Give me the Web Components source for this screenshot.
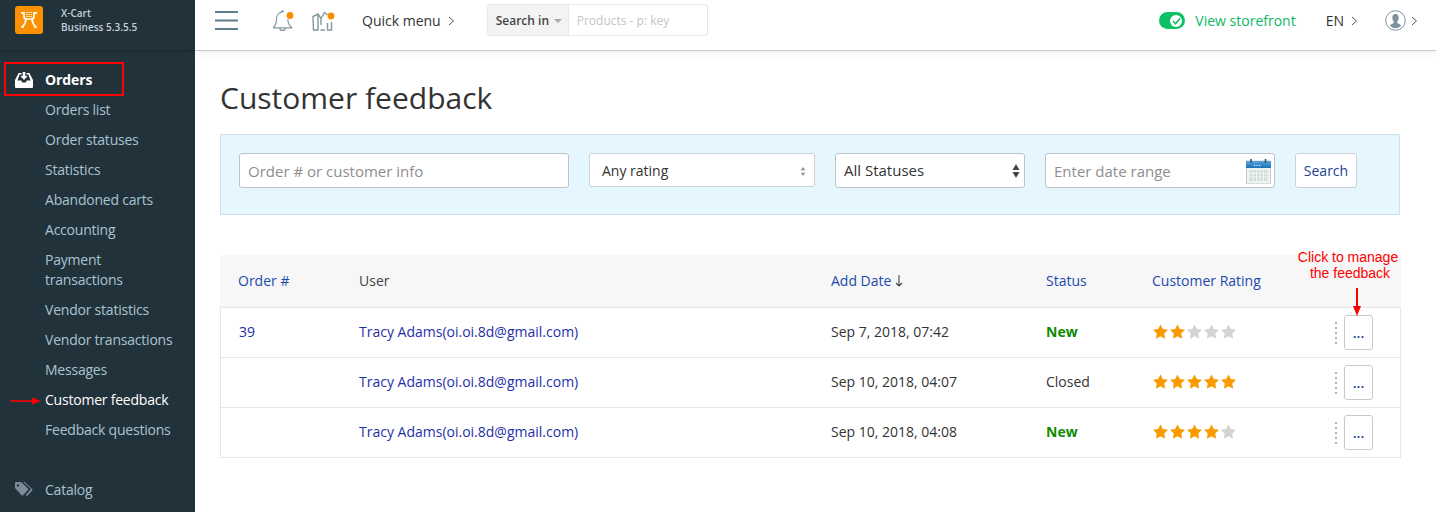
<!DOCTYPE html>
<html lang="en"><head><meta charset="utf-8"><title>Customer feedback</title>
<style>
html,body{margin:0;padding:0;height:512px;overflow:hidden;background:#fff;font-family:"Open Sans","Noto Sans",sans-serif;}
</style></head><body>
<xc-app>
  <xc-sidebar slot="side">
    <xc-nav-item head icon="orders">Orders</xc-nav-item>
    <xc-nav-item>Orders list</xc-nav-item>
    <xc-nav-item>Order statuses</xc-nav-item>
    <xc-nav-item>Statistics</xc-nav-item>
    <xc-nav-item>Abandoned carts</xc-nav-item>
    <xc-nav-item>Accounting</xc-nav-item>
    <xc-nav-item>Payment<br>transactions</xc-nav-item>
    <xc-nav-item>Vendor statistics</xc-nav-item>
    <xc-nav-item>Vendor transactions</xc-nav-item>
    <xc-nav-item>Messages</xc-nav-item>
    <xc-nav-item current>Customer feedback</xc-nav-item>
    <xc-nav-item>Feedback questions</xc-nav-item>
    <xc-nav-item gap icon="tag">Catalog</xc-nav-item>
  </xc-sidebar>
  <xc-topbar slot="top"></xc-topbar>
  <xc-page slot="main" heading="Customer feedback">
    <xc-filters></xc-filters>
    <xc-table>
      <xc-row order="39" date="Sep 7, 2018, 07:42" status="New" rating="2"></xc-row>
      <xc-row date="Sep 10, 2018, 04:07" status="Closed" rating="5"></xc-row>
      <xc-row date="Sep 10, 2018, 04:08" status="New" rating="4"></xc-row>
    </xc-table>
  </xc-page>
</xc-app>
<script>
function def(name, html, init){
  const t=document.createElement('template'); t.innerHTML=html;
  customElements.define(name, class extends HTMLElement{
    constructor(){super(); this.attachShadow({mode:'open'}).appendChild(t.content.cloneNode(true));}
    connectedCallback(){ if(init) init.call(this,this.shadowRoot); }
  });
}
def('xc-app',`<style>
:host{display:grid;grid-template-columns:195px 1fr;grid-template-rows:50px 1fr;width:1436px;height:512px;overflow:hidden;position:relative;color:#333}
</style>
<slot name="side"></slot><slot name="top"></slot><slot name="main"></slot>`);
def('xc-sidebar',`<style>
:host{display:block;grid-row:1/3;grid-column:1;background:#22323b;height:512px;overflow:hidden;position:relative}
.brand{height:50px;box-sizing:border-box;display:flex;align-items:flex-start;padding:6px 0 0 15px;gap:17px;background:#22323b;box-shadow:0 1px 3px rgba(0,0,0,.25);position:relative}
.t{font-size:10px;font-weight:600;line-height:14px;color:#c3d0d8;margin-left:1px;white-space:nowrap}
nav{display:block;padding-top:15px}
.box{position:absolute;left:4px;top:62px;width:116px;height:30px;border:2px solid #f00;pointer-events:none}
.arrow{position:absolute;left:10px;top:397px;pointer-events:none}
</style>
<div class="brand"><svg width="28" height="28" viewBox="0 0 28 28"><rect width="28" height="28" rx="3" fill="#fb9100"/>
<g fill="none" stroke="#fff" stroke-width="1.700"><path d="M6 6.900h3v3.600c0 1.800 1 2.500 2.500 2.500h5c1.500 0 2.500-.7 2.500-2.500V6.900h3"/><path d="M11 13c0 3-1.500 5.500-3.500 8M17 13c0 3 1.500 5.500 3.500 8"/><path d="M6 21h3M19 21h3"/></g>
<path d="M11.200 6.500h1.300M13.400 6.500h1.300M15.600 6.500h1.300M11.200 8.500h1.300M13.400 8.500h1.300M15.600 8.500h1.300M11.200 10.500h1.300M13.400 10.500h1.300M15.600 10.500h1.300" stroke="#fff" stroke-width="1.200"/></svg>
<div class="t">X-Cart<br>Business 5.3.5.5</div></div>
<nav><slot></slot></nav>
<div class="box"></div>
<svg class="arrow" width="32" height="8" viewBox="0 0 32 8"><path d="M0 4h24" stroke="#f00" stroke-width="1.500"/><path d="M22 0.500l9 3.500-9 3.500z" fill="#f00"/></svg>`);
const navIcons={
 orders:`<svg width="18" height="16" viewBox="0 0 18 16"><path fill="#fff" d="M3.600 1h2.900v1.600H4.700L2.500 8.500h3.700l1.100 2h3.400l1.100-2h3.700l-2.200-5.900h-1.800V1h2.900L18 8v7a1 1 0 0 1-1 1H1a1 1 0 0 1-1-1V8z"/><path fill="#fff" d="M7.700 0h2.600v4h2.400L9 8 5.300 4h2.400z"/></svg>`,
 tag:`<svg width="18" height="14" viewBox="0 0 18 14"><path fill="#7b8d97" d="M0 1a1 1 0 0 1 1-1h5l7 6.500a1 1 0 0 1 0 1.400l-5 5.300a1 1 0 0 1-1.400 0L0 6zM3 2.200a1.200 1.200 0 1 0 0 2.400 1.200 1.200 0 0 0 0-2.400z"/><path fill="#7b8d97" d="M8 0h1.500l7.700 7a1 1 0 0 1 0 1.400l-4.600 5a1 1 0 0 1-1.300 0l-.6-.5 4.500-5a1.200 1.200 0 0 0 0-1.700z"/></svg>`};
def('xc-nav-item',`<style>
:host{display:block;font-size:14px;line-height:20px;color:#a9c3d1}
.i{display:flex;padding:5px 0 5px 45px;position:relative;letter-spacing:-.22px}
.ic{position:absolute;left:15px;top:7px;display:flex}
:host([head]){font-weight:700;color:#fff}
:host([head]) .i{letter-spacing:-.1px}
:host([current]){color:#fff}
:host([gap]){margin-top:30px}
</style><div class="i"><span class="ic"></span><span><slot></slot></span></div>`, function(r){
  const k=this.getAttribute('icon'); if(k) r.querySelector('.ic').innerHTML=navIcons[k];
});
const chev=`<svg width="7" height="10" viewBox="0 0 7 10"><path d="M1 1l4.500 4L1 9" fill="none" stroke="#555" stroke-width="1"/></svg>`;
def('xc-topbar',`<style>
:host{display:flex;grid-column:2;grid-row:1;align-items:center;height:50px;background:#fff;box-sizing:border-box;padding-bottom:9px;font-size:14px;color:#333;position:relative;box-shadow:0 1px 0 #c9c9c9,0 4px 6px rgba(0,0,0,.06);z-index:2}
.burger{margin-left:20px;display:flex}
.bell{margin-left:33px;display:flex}
.mp{margin-left:18px;display:flex}
.qm{margin-left:27px;display:flex;align-items:center;gap:7px;font-size:14px;color:#333}
.search{margin-left:32px;display:flex;height:32px;box-sizing:border-box;border:1px solid #e8e8e8;border-radius:3px;width:221px;margin-top:-1px}
.si{background:#f3f3f3;border-right:1px solid #e8e8e8;width:81px;box-sizing:border-box;display:flex;align-items:center;padding-left:8px;gap:5px;font-size:12px;font-weight:600;color:#444}
.ca{width:0;height:0;border:4px solid transparent;border-top:4px solid #aaa;border-bottom:0;margin-top:2px}
.ph{padding-left:8px;font-size:12px;color:#c4c4c4;display:flex;align-items:center}
.sp{flex:1}
.sw{width:26px;height:17px;border-radius:9px;background:#0cc064;display:flex;align-items:center;justify-content:flex-end;box-sizing:border-box;padding-right:3px}
.k{width:12px;height:12px;border-radius:50%;background:#fff;display:flex;align-items:center;justify-content:center}
.vs{margin-left:10px;color:#0cb862;font-size:14px}
.en{margin-left:30px;display:flex;gap:7px;align-items:center;font-size:14px}
.u{margin-left:27px;display:flex;gap:5px;align-items:center;margin-right:18px}
</style>
<span class="burger"><svg width="24" height="19" viewBox="0 0 24 19"><path d="M0 1h23M0 9.500h23M0 18h23" stroke="#5f7d8b" stroke-width="2"/></svg></span>
<span class="bell"><svg width="22" height="23" viewBox="0 0 22 23"><g fill="none" stroke="#84989f" stroke-width="1.200"><path d="M1.500 18.500C3.500 16.500 4.500 14 4.500 10 4.500 6 7 3.200 10.500 3.200M15.800 10c.2 3.500 1.200 6.500 3.700 8.500M1 18.900h19.500M7.800 19.200c0 3 5.400 3 5.400 0M9.300 3.200c0-1.800 2.400-1.800 2.400 0"/></g><circle cx="18" cy="6.500" r="3.400" fill="#fb8c00"/></svg></span>
<span class="mp"><svg width="23" height="22" viewBox="0 0 23 22"><g fill="none" stroke="#84989f" stroke-width="1.400"><path d="M1 6.500 L6 4v16H1.500zM6 4l3 4.500 3.500-6 3 2.500M9 8.500V15M15.500 13v7h4v-8M8.500 20h4.500"/></g><circle cx="19" cy="6" r="3.400" fill="#fb8c00"/></svg></span>
<span class="qm">Quick menu ${chev}</span>
<div class="search"><div class="si">Search in<span class="ca"></span></div><div class="ph">Products - p: key</div></div>
<span class="sp"></span>
<span class="sw"><span class="k"><svg width="9" height="8" viewBox="0 0 10 8"><path d="M1 4l3 3 5-6" fill="none" stroke="#0cc064" stroke-width="1.800"/></svg></span></span>
<span class="vs">View storefront</span>
<span class="en">EN ${chev}</span>
<span class="u"><svg width="21" height="21" viewBox="0 0 21 21"><circle cx="10.500" cy="10.500" r="9.800" fill="#fff" stroke="#7b919c"/><path fill="#7b919c" d="M10.500 4c2 0 3.200 1.500 3.200 3.700 0 1.600-.7 3-1.400 3.700v1.500l4 2.300c-1.400 2-3.500 3-5.800 3s-4.400-1-5.800-3l4-2.300v-1.500c-.7-.7-1.400-2.100-1.400-3.700C7.300 5.500 8.500 4 10.500 4z"/></svg>${chev}</span>`);
def('xc-page',`<style>
:host{display:block;grid-column:2;grid-row:2;padding:0 36px 0 25px;position:relative;min-width:0}
h1{margin:27px 0 15px;font-size:30px;line-height:42px;font-weight:400;color:#333}
</style><h1></h1><slot></slot>`, function(r){ r.querySelector('h1').textContent=this.getAttribute('heading'); });
def('xc-filters',`<style>
:host{display:flex;align-items:flex-start;box-sizing:border-box;height:81px;background:#e5f6ff;border:1px solid #cfe1ea;padding:18px 0 0 18px;gap:20px;font-size:14px;color:#333;margin-bottom:40px}
.c{box-sizing:border-box;height:35px;background:#fff;border:1px solid #bdc3c7;border-radius:3px;display:flex;align-items:center;position:relative}
.q{width:330px;padding-left:8px;color:#8e8e8e;font-size:15px}
.r{width:226px;height:34px;border-color:#ccd1d4;padding-left:12px}
.st{width:190px;padding-left:8px;font-size:15px;padding-bottom:2px}
.d{width:230px;padding-left:8px;color:#8e8e8e;font-size:15px}
.b{width:62px;justify-content:center;border-color:#ccd1d4;color:#1c3f94}
svg{position:absolute}
</style>
<div class="c q">Order # or customer info</div>
<div class="c r">Any rating<svg style="right:8px;top:13px" width="6" height="9" viewBox="0 0 6 9"><path d="M3 0l2.500 3.300h-5zM3 9L.5 5.700h5z" fill="#999"/></svg></div>
<div class="c st">All Statuses<svg style="right:4px;top:9px" width="8" height="16" viewBox="0 0 8 16"><path d="M4 1l3.500 6h-7zM4 15L.5 9h7z" fill="#444"/></svg></div>
<div class="c d">Enter date range<svg style="right:3px;top:5px" width="25" height="25" viewBox="0 0 25 25"><defs><linearGradient id="g" x1="0" y1="0" x2="0" y2="1"><stop offset="0" stop-color="#5aa6dc"/><stop offset="1" stop-color="#1872b4"/></linearGradient></defs><rect x=".5" y="2" width="24" height="23" fill="#eef3f2" stroke="#9fb2b6" stroke-width=".6"/><rect x="0" y="2" width="25" height="7" fill="url(#g)"/><path d="M5 0v4M19.500 0v4" stroke="#31536e" stroke-width="1.600"/><rect x="3.500" y="11" width="18" height="11" fill="#cfe0dc"/><path d="M3.500 14.500h18M3.500 18h18M7 11v11M10.500 11v11M14 11v11M17.500 11v11" stroke="#f1f6f5" stroke-width=".9"/><path d="M8 6.500h1.200M10.500 6.500h1.200M13 6.500h1.200" stroke="#fff"/></svg></div>
<div class="c b">Search</div>`);
def('xc-table',`<style>
:host{display:block;border:solid #e6e6e6;border-width:0 1px;font-size:14px;margin-right:-1px;position:relative}
.h{display:grid;grid-template-columns:139px 472px 215px 106px 1fr;background:#f7f7f7;height:52px;align-items:center;box-sizing:content-box;border-bottom:1px solid #e6e6e6;margin:0 -1px}
.h span{padding-bottom:2px}
.h span:first-child{padding-left:18px}
.l{color:#1c49ae}.u{color:#444}
.note{position:absolute;right:-1px;top:-6px;width:106px;text-align:center;font:14px/16px "Liberation Sans",Arial,sans-serif;color:#f00}
.note span{padding-left:4px}
.ar{position:absolute;left:1131px;top:33px}
</style>
<div class="h"><span class="l">Order #</span><span class="u">User</span><span class="l">Add Date <svg width="8" height="12" viewBox="0 0 8 12" style="vertical-align:-1px"><path d="M4 0v11M1 8l3 3 3-3" fill="none" stroke="#444" stroke-width="1.100"/></svg></span><span class="l">Status</span><span class="l">Customer Rating</span></div>
<slot></slot>
<div class="note">Click to manage<br><span>the feedback</span></div>
<svg class="ar" width="10" height="29" viewBox="0 0 10 29"><path d="M5 0v20" stroke="#f00" stroke-width="2"/><path d="M1 18h8l-4 10z" fill="#f00"/></svg>`);
const star=c=>`<svg width="15" height="15" viewBox="0 0 24 24" style="margin-right:2px;display:block"><path fill="${c}" d="M12 .6l3.700 7.500 8.300 1.200-6 5.900 1.400 8.300L12 19.600l-7.400 3.900L6 15.200 0 9.300l8.300-1.200z"/></svg>`;
def('xc-row',`<style>
:host{display:grid;grid-template-columns:138px 472px 215px 106px 178px 1fr;height:50px;align-items:center;border-bottom:1px solid #e6e6e6;box-sizing:border-box;color:#333;font-size:14px}
.o,.u,.dt,.s,.stars{padding-bottom:2px}
.o{padding-left:18px;color:#1f2fa8}
.u{color:#1f2fa8}
.new{color:#0d8a00;font-weight:700}
.stars{display:flex;padding-left:1px}
.act{display:flex;align-items:center;padding-left:5px}
.dots{width:2px;height:22px;margin-right:7px;background:linear-gradient(#a9b4ba 2px,transparent 2px) 0 0/2px 5px repeat-y}
.btn{width:29px;height:35px;box-sizing:border-box;border:1px solid #c7c9cb;border-radius:3px;display:flex;align-items:center;justify-content:center;color:#1c3f94;font-size:14px;background:#fff;font-weight:600}
</style>
<span class="o"></span><span class="u">Tracy Adams(oi.oi.8d@gmail.com)</span><span class="dt"></span><span class="s"></span><span class="stars"></span>
<span class="act"><span class="dots"></span><span class="btn">...</span></span>`, function(r){
  r.querySelector('.o').textContent=this.getAttribute('order')||'';
  r.querySelector('.dt').textContent=this.getAttribute('date');
  const s=r.querySelector('.s'); const v=this.getAttribute('status'); s.textContent=v; if(v==='New') s.className='s new';
  const n=+this.getAttribute('rating'); let h=''; for(let i=0;i<5;i++) h+=star(i<n?'#f99a00':'#d3d3d3'); r.querySelector('.stars').innerHTML=h;
});
</script>
</body></html>
